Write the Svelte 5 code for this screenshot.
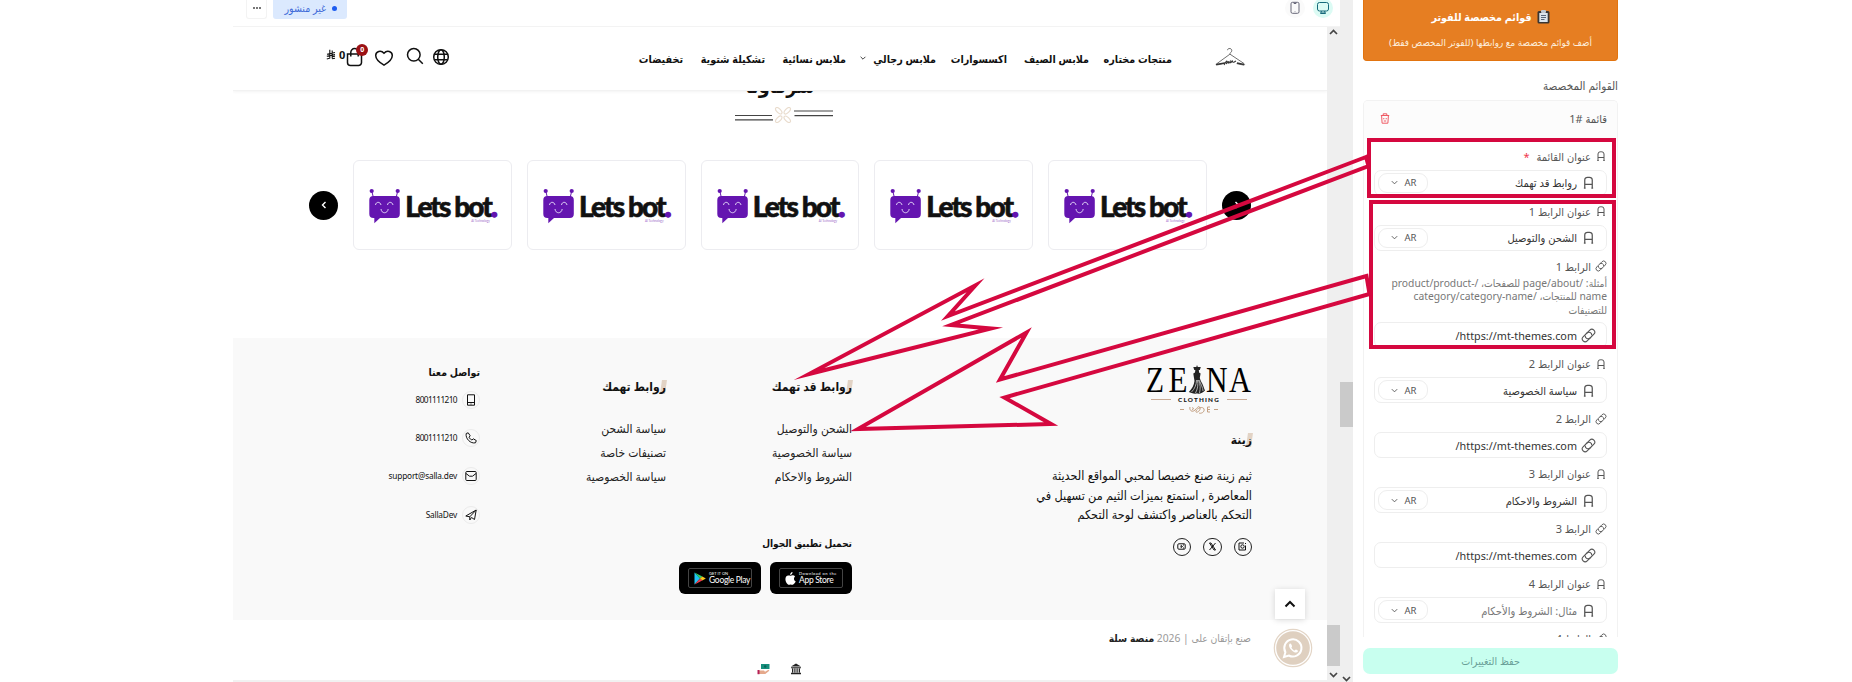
<script>
  const navItems = [
    { text: "منتجات مختاره", width: 70 },
    { text: "ملابس الصيف", width: 69 },
    { text: "اكسسوارات", width: 58 },
    { text: "ملابس رجالي", width: 61, arrow: true },
    { text: "ملابس نسائية", width: 68 },
    { text: "تشكيلة شتوية", width: 69 },
    { text: "تخفيضات", width: 46 },
  ];

  const partners = [1, 2, 3, 4, 5];

  const linkColumns = [
    { title: "روابط قد تهمك", links: ["الشحن والتوصيل", "سياسة الخصوصية", "الشروط والاحكام"] },
    { title: "روابط تهمك", links: ["سياسة الشحن", "تصنيفات خاصة", "سياسة الخصوصية"] },
  ];

  const contacts = [
    { icon: "mobile", text: "8001111210", number: true },
    { icon: "phone", text: "8001111210", number: true },
    { icon: "mail", text: "support@salla.dev" },
    { icon: "send", text: "SallaDev" },
  ];

  const fields = [
    { kind: "text", label: "عنوان القائمة", value: "روابط قد تهمك", required: true },
    { kind: "text", label: "عنوان الرابط 1", value: "الشحن والتوصيل" },
    { kind: "link", label: "الرابط 1", value: "https://mt-themes.com/", hint: true },
    { kind: "text", label: "عنوان الرابط 2", value: "سياسة الخصوصية" },
    { kind: "link", label: "الرابط 2", value: "https://mt-themes.com/" },
    { kind: "text", label: "عنوان الرابط 3", value: "الشروط والاحكام" },
    { kind: "link", label: "الرابط 3", value: "https://mt-themes.com/" },
    { kind: "text", label: "عنوان الرابط 4", value: "مثال: الشروط والأحكام", placeholder: true },
    { kind: "link", label: "الرابط 4", value: "" },
  ];
</script>

{#snippet fieldIcon(kind, size)}
  {#if kind === "text"}
    <svg width={size} height={size} viewBox="0 0 12 12" class="line">
      <path d="M3 10.500V4A2.200 2.200 0 0 1 5.200 1.800h1.600A2.200 2.200 0 0 1 9 4v6.500M3 7.500h6M2.300 10.500h1.400M8.300 10.500h1.400" />
    </svg>
  {:else}
    <svg width={size} height={size} viewBox="0 0 14 14" class="line">
      <g transform="rotate(-45 7 7)">
        <path d="M6.500 9.700H2.600a2.700 2.700 0 0 1 0-5.400h5a2.700 2.700 0 0 1 1.600 4.800" />
        <path d="M7.500 4.300h3.900a2.700 2.700 0 0 1 0 5.400h-5a2.700 2.700 0 0 1-1.600-4.800" />
      </g>
    </svg>
  {/if}
{/snippet}

{#snippet chevron(size)}
  <svg width={size} height={size} viewBox="0 0 10 10" class="line"><path d="M2 3.500l3 3 3-3" /></svg>
{/snippet}

<div class="page">
  <div class="preview">
    <div class="toolbar">
      <div class="devices">
        <span class="device active">
          <svg width="14" height="14" viewBox="0 0 14 14" class="line">
            <rect x="1.5" y="1.5" width="11" height="8.5" rx="2" />
            <path d="M5.5 10l-1 2.5h5l-1-2.500M5 12h4" />
          </svg>
        </span>
        <span class="device">
          <svg width="12" height="14" viewBox="0 0 12 14" class="line">
            <rect x="2" y="1.300" width="8" height="11" rx="1.500" />
            <path d="M5 1.500v1h2v-1M6 10.500v.5" />
          </svg>
        </span>
      </div>
      <div class="status">
        <span class="badge"><i></i>غير منشور</span>
        <button class="more" aria-label="المزيد"><i></i><i></i><i></i></button>
      </div>
    </div>

    <div class="frame">
      <div class="store">
        <header>
          <svg class="hanger" width="32" height="20" viewBox="0 0 32 20">
            <path d="M13.500 3.200C13.500.8 18 .8 17.800 3.800c-.2 1.700-2 1.600-1.900 3.400L3.500 16.200c-2 1.400-1.500 2 .5 1.600l6-1.500M16 7.200l13.500 9c1.800 1.500 1.200 2-.8 1.700l-6-1.300" />
            <path d="M2 17.500l9-1.500M30 17.500l-7-1.500" stroke-width="1.500" />
            <path d="M10 18c1.500-2 2.500-5 3-3.500s-1.500 3 0 1.500 1.300-2 1.500-.5.9 0 1.700-1.200c.2 1.500 0 2 1 1s1-2.500 1.300-.8 1.700.3 3.500-.5" stroke-width="1.100" />
          </svg>
          <nav>
            {#each navItems as item}
              <a href="#top" class:has-arrow={item.arrow} style="width: {item.width}px">
                {item.text}
                {#if item.arrow}<span class="nav-arrow">{@render chevron(8)}</span>{/if}
              </a>
            {/each}
          </nav>
          <div class="actions">
            <svg width="18" height="18" viewBox="0 0 18 18" class="line globe">
              <circle cx="9" cy="9" r="7.300" />
              <ellipse cx="9" cy="9" rx="3.300" ry="7.300" />
              <path d="M2.500 6.200h13M2.500 11.800h13" />
            </svg>
            <svg width="18" height="18" viewBox="0 0 18 18" class="line search">
              <circle cx="7.800" cy="7.800" r="6.300" /><path d="M12.300 12.300l4.500 4.500" />
            </svg>
            <svg width="20" height="18" viewBox="0 0 20 18" class="line heart">
              <path d="M10 16.200C5.500 13.500 1.700 10.200 1.700 6.500 1.700 2.300 7 .7 10 4.200 13 .7 18.300 2.300 18.300 6.500c0 3.700-3.800 7-8.300 9.700z" />
            </svg>
            <div class="cart">
              <svg width="17" height="20" viewBox="0 0 17 20" class="line">
                <path d="M1.500 7h14v8.500a3 3 0 0 1-3 3h-8a3 3 0 0 1-3-3zM4.800 9.500V5.300a3.700 3.700 0 0 1 7.400 0v4.200" />
              </svg>
              <span class="count">0</span>
            </div>
            <span class="total">0</span>
            <svg width="10" height="11" viewBox="0 0 10 11" class="riyal">
              <path d="M3.800.8v8.400L.8 10M6.200 1.500v8M1 5.200l8-1.700M.8 7.300l8.200-1.700M6.200 7.800L9 7.200M6.200 9.800L9 9.200" />
            </svg>
          </div>
        </header>

        <section class="partners">
          <h2>شركاؤنا</h2>
          <svg class="ornament" width="98" height="16" viewBox="0 0 98 16">
            <path d="M0 8.500h37M0 12.800h38M59 4h39M59.500 8.700h38.500" stroke="#444" stroke-width="1.200" />
            <g fill="none" stroke="#e9dccd" stroke-width="1.200">
              {#each [45, 135, 225, 315] as angle}
                <ellipse cx="54" cy="8" rx="4" ry="2" transform="rotate({angle} 48 8)" />
              {/each}
            </g>
          </svg>
          <div class="slider">
            <button class="arrow" aria-label="السابق">
              <svg width="8" height="10" viewBox="0 0 8 10"><path d="M2.500 2l3 3-3 3" /></svg>
            </button>
            <div class="cards">
              {#each partners as partner (partner)}
                <div class="card">
                  <div class="brand">
                    <svg width="32" height="36" viewBox="0 0 32 36">
                      <g stroke="#6415b0" stroke-width="1"><path d="M3 4l1.500 6M28.500 4L27 10" /></g>
                      <circle cx="2.700" cy="3" r="2.100" fill="#6415b0" />
                      <circle cx="28.700" cy="3" r="2.100" fill="#6415b0" />
                      <rect x=".3" y="8" width="30.500" height="22" rx="4" fill="#6415b0" />
                      <path d="M5.300 29v6.200l6.500-6z" fill="#6415b0" />
                      <path d="M6.500 17c.5-3.600 4.700-3.600 5.500 0M18.500 17c.5-3.600 4.700-3.600 5.500 0M12 21c.5 5 6.500 5 7.200 0" fill="none" stroke="#ded0f5" stroke-width="1" />
                    </svg>
                    <span class="word">Lets bot<b>.</b><small>AI Technology</small></span>
                  </div>
                </div>
              {/each}
            </div>
            <button class="arrow" aria-label="التالي">
              <svg width="8" height="10" viewBox="0 0 8 10"><path d="M5.500 2l-3 3 3 3" /></svg>
            </button>
          </div>
        </section>

        <footer>
          <div class="about">
            <div class="zeina">
              <svg class="zeina-name" width="106" height="30" viewBox="0 0 106 30">
                <text x="0" y="27" textLength="18" lengthAdjust="spacingAndGlyphs">Z</text>
                <text x="22.500" y="27" textLength="19" lengthAdjust="spacingAndGlyphs">E</text>
                <text x="60" y="27" textLength="21.500" lengthAdjust="spacingAndGlyphs">N</text>
                <text x="83" y="27" textLength="22" lengthAdjust="spacingAndGlyphs">A</text>
                <g transform="translate(42.500 0)">
                  <path d="M8.500 0l.8 2h3l-1 3h-1l.3 2.500 1.500 1-.8 4.500 1 3c2.500 4 3 7 4.200 9.500-2 2.500-5 3.500-8 3-3.500.5-6-.5-8.200-1.500C3.500 24 5.500 20 6 16l-.5-3-.7-4.500 1.700-1L6.800 5h-1l-1-3h3z" fill="#222" />
                  <path d="M8 15c0 5-2 9-5 12M9 15c1 5 0 9-2 13M10 15c2 5 2 8 1 13M10.500 15c2 4 4 8 4 11" fill="none" stroke="#ccc" stroke-width=".8" />
                </g>
              </svg>
              <div class="zeina-sub"><i></i>CLOTHING<i></i></div>
              <svg width="38" height="9" viewBox="0 0 38 9" class="flourish">
                <path d="M0 4.500h4M34 4.500h4" />
                <path d="M10 2c-1 3 2 6 5 3s4-5 5-2-5 6-4 3 7-5 8-2-3 5-5 4M12 3c2-1 2 2 0 1.500M27.500 2v5M27.500 2H30M27.500 4.500H30M27.500 7H30" />
              </svg>
            </div>
            <h3 class="marked">زينة</h3>
            <p>ثيم زينة صنع خصيصا لمحبي المواقع الحديثة<br />المعاصرة , استمتع بميزات الثيم من تسهيل في<br />التحكم بالعناصر واكتشف لوحة التحكم</p>
            <div class="socials">
              <span><svg width="9" height="9" viewBox="0 0 9 9" class="line"><path d="M7.500 3.500V8H1V1h5" /><circle cx="4.500" cy="4.500" r="1.700" /><path d="M7 1.500h1" /></svg></span>
              <span><svg width="9" height="9" viewBox="0 0 9 9" class="line"><path d="M1.500 1l4.500 7h1.500L3 1zM7.500 1L1.500 8" /></svg></span>
              <span><svg width="9" height="9" viewBox="0 0 9 9" class="line"><rect x=".8" y="1.800" width="7.400" height="5.400" rx="1" /><path d="M4 3.500v2l1.500-1zM6 3h1M6 6h1" /></svg></span>
            </div>
          </div>

          <div class="middle">
            <div class="columns">
              {#each linkColumns as column}
                <div class="column">
                  <h3 class="marked">{column.title}</h3>
                  {#each column.links as link}
                    <a href="#top">{link}</a>
                  {/each}
                </div>
              {/each}
            </div>
            <h4>تحميل تطبيق الجوال</h4>
            <div class="apps">
              <a href="#top" class="app">
                <span class="app-inner">
                  <svg width="11" height="13" viewBox="0 0 11 13">
                    <path d="M7.500 0C6 .2 5 1.600 5.200 3 6.600 3 7.700 1.500 7.500 0zM10 4.500C8.500 2.800 6.800 3.400 5.500 3.800 4.200 3.300 2.500 3 1.200 4.500-.5 7 .8 11 3 12.600c1 .5 1.700-.2 2.600-.2s1.600.7 2.600.2C9.500 11.800 10.300 10.500 10.700 9.300 8.600 8.300 8.500 5.700 10 4.500z" fill="#fff" />
                  </svg>
                  <span class="app-text"><small class="spaced">Download on the</small>App Store</span>
                </span>
              </a>
              <a href="#top" class="app">
                <span class="app-inner">
                  <svg width="12" height="13" viewBox="0 0 12 13">
                    <path d="M.5.5v12L6 6.500z" fill="#20c4f4" /><path d="M.5.500L6 6.500l2.300-2z" fill="#2fd06c" />
                    <path d="M.5 12.500l5.500-6 2.300 2z" fill="#ee3d4e" /><path d="M8.300 4.500L11.800 6.500l-3.500 2L6 6.500z" fill="#fbc51d" />
                  </svg>
                  <span class="app-text"><small>GET IT ON</small>Google Play</span>
                </span>
              </a>
            </div>
          </div>

          <div class="contact">
            <h4>تواصل معنا</h4>
            {#each contacts as contact}
              <div class="contact-row">
                <span class="contact-icon">
                  <svg width="12" height="12" viewBox="0 0 12 12" class="line">
                    {#if contact.icon === "mobile"}
                      <path d="M2.500.8h7v10.400h-7zM2.500 8.500h7M5.500 10h1" />
                    {:else if contact.icon === "phone"}
                      <path d="M1.200 1.500L3.200.8l2 3L4 5.200C4.800 6.800 5.700 7.500 7 8l1.300-1.200 3 1.800-.8 2.200C5.500 12 .2 6.500 1.200 1.500z" />
                    {:else if contact.icon === "mail"}
                      <rect x=".8" y="1.500" width="10.400" height="9" rx="1" /><path d="M1 3.500l3.500 2.700h3L11 3.500" />
                    {:else}
                      <path d="M.8 7L11.200 1 9.500 10.500 6.500 8.500 4.800 11V7.800L11 1.200M.8 7l4 .8" />
                    {/if}
                  </svg>
                </span>
                <bdi class:number={contact.number}>{contact.text}</bdi>
              </div>
            {/each}
          </div>
        </footer>

        <div class="bottom">
          <div class="rights">صنع بإتقان على | 2026 <b>منصة سلة</b></div>
          <div class="payments">
            <svg width="12" height="12" viewBox="0 0 12 12">
              <path d="M6 .5L11 3.500H1zM1 4.200h10v1H1zM2 5.500h1.300v4H2zM4.300 5.500h1.200v4H4.300zM6.500 5.500h1.200v4H6.500zM8.700 5.500H10v4H8.700zM1 9.800h10v1.500H1z" fill="#222" />
            </svg>
            <svg width="13" height="12" viewBox="0 0 13 12">
              <rect x="4" y="1" width="8.500" height="5" fill="#168f7c" /><circle cx="8.200" cy="3.500" r="1.200" fill="#0c6156" />
              <path d="M2 7.500h5l1 1.300 3.500-2 .8.900-4 3.300H2z" fill="#e5a98c" /><rect x=".5" y="7" width="2" height="4.200" fill="#b62058" />
            </svg>
          </div>
        </div>

        <button class="to-top" aria-label="إلى الأعلى">
          <svg width="12" height="8" viewBox="0 0 12 8"><path d="M1.500 6.500L6 2l4.500 4.500" fill="none" stroke="#111" stroke-width="2" /></svg>
        </button>
        <div class="whatsapp">
          <svg width="40" height="40" viewBox="0 0 40 40">
            <circle cx="20" cy="20" r="18.700" fill="none" stroke="#e3d5c6" stroke-width="1.200" />
            <circle cx="20" cy="20" r="16.800" fill="#dfd0c0" />
            <path d="M11 29l1.400-4.800A8.600 8.600 0 1 1 15.800 27.500z" fill="none" stroke="#fff" stroke-width="2" />
            <path d="M17 15.500c-2 1.300-.6 4.500 1.700 6.700s5 3.300 6.200 1.200c.3-.8-.2-1.100-1.900-1.900-.6-.2-.9.800-1.400 1-.9 0-3.200-2.300-3.200-3.100.2-.5.900-.8.600-1.500-.6-1.600-.9-2.600-2-2.400z" fill="#fff" />
          </svg>
        </div>
      </div>
      <div class="scrollbar inner">
        <svg width="13" height="10" viewBox="0 0 13 10"><path d="M3 7l3.500-3.500L10 7" /></svg>
        <div class="thumb"></div>
        <svg width="13" height="10" viewBox="0 0 13 10"><path d="M3 3l3.500 3.500L10 3" /></svg>
      </div>
    </div>
  </div>

  <div class="scrollbar outer">
    <div class="thumb"></div>
    <svg width="13" height="10" viewBox="0 0 13 10"><path d="M3 3l3.500 3.500L10 3" /></svg>
  </div>

  <aside>
    <div class="banner">
      <h1>
        <svg width="13" height="14" viewBox="0 0 13 14">
          <rect x=".5" y="1" width="12" height="12.500" rx="1.500" fill="#3b3632" /><rect x="2.300" y="3" width="8.400" height="9" fill="#dce5ec" />
          <rect x="4" y="0" width="5" height="3" rx="1" fill="#bfc8d0" /><path d="M4 5.500h5M4 7.500h5M4 9.500h3.500" stroke="#58677a" />
        </svg>
        قوائم مخصصة للفوتر
      </h1>
      <p>أضف قوائم مخصصة مع روابطها (للفوتر المخصص فقط)</p>
    </div>
    <div class="group-label">القوائم المخصصة</div>
    <div class="group">
      <div class="group-head">
        <span>قائمة #1</span>
        <svg width="10" height="11" viewBox="0 0 10 11" class="line">
          <path d="M.8 2.500h8.400M3.200 2.300V.8h3.600v1.500M1.600 2.700l.5 7.500h5.800l.5-7.500M3.800 5v1.300M6.200 5v1.300M3.800 8h2.400" />
        </svg>
      </div>
      <div class="fields">
        {#each fields as field}
          <div class="field-label">
            {@render fieldIcon(field.kind, 12)}
            <span>{field.label}</span>
            {#if field.required}<em>*</em>{/if}
          </div>
          {#if field.hint}
            <p class="hint">أمثلة: /page/about للصفحات، /product/product-name للمنتجات، /category/category-name للتصنيفات</p>
          {/if}
          <div class="input">
            {@render fieldIcon(field.kind, 15)}
            <span class="value" class:placeholder={field.placeholder} class:url={field.kind === "link"}>{field.value}</span>
            {#if field.kind === "text"}
              <span class="lang">AR {@render chevron(9)}</span>
            {/if}
          </div>
        {/each}
      </div>
    </div>
    <button class="save">حفظ التغييرات</button>
  </aside>

  <!-- callouts that tie the form fields to the footer column -->
  <svg class="callouts" width="1852" height="682" viewBox="0 0 1852 682">
    <rect x="1369" y="140" width="245" height="56" />
    <rect x="1371" y="202" width="243" height="145" />
    <path d="M1366 157L948 316 975.500 285.300 809 374 991 328.500 951 325 1368.500 166z" />
    <path d="M1366.500 276L1000 379.500 1026.500 332.500 858 429 1051 424 1004.500 397.500 1369.500 294z" />
  </svg>
</div>

<style>
  :global(body) {
    margin: 0;
    background: #fff;
  }

  .page {
    position: relative;
    display: flex;
    width: 1852px;
    height: 682px;
    overflow: hidden;
    box-sizing: border-box;
    padding-left: 233px;
    font-family: "Noto Sans", "DejaVu Sans Condensed", "DejaVu Sans", sans-serif;
    font-size: 11px;
    color: #111;
  }

  .page :global(*) {
    box-sizing: border-box;
  }

  .page svg {
    display: block;
    flex: none;
  }

  .line {
    fill: none;
    stroke: currentColor;
    stroke-width: 1;
  }

  button {
    border: 0;
    padding: 0;
    font-family: inherit;
  }

  a {
    color: inherit;
    text-decoration: none;
    white-space: nowrap;
  }

  h1,
  h2,
  h3,
  h4,
  p {
    margin: 0;
  }

  .preview {
    width: 1107px;
    direction: rtl;
    display: flex;
    flex-direction: column;
  }

  .toolbar {
    height: 27px;
    display: flex;
    justify-content: space-between;
    padding: 0 7px 0 13px;
    border-bottom: 1px solid #f3f3f3;
  }

  .devices {
    display: flex;
    gap: 8px;
    margin-top: -2px;
  }

  .device {
    width: 20px;
    height: 20px;
    display: grid;
    place-items: center;
    border-radius: 50%;
    background: #fafafa;
    color: #667;
  }

  .device.active {
    background: #dcfbf4;
    color: #16697a;
  }

  .status {
    display: flex;
    gap: 6px;
  }

  .badge {
    width: 74px;
    height: 19px;
    display: flex;
    align-items: center;
    gap: 6px;
    padding: 0 10px 3px 0;
    border-radius: 0 0 3px 3px;
    background: #dbe9fe;
    color: #3e6bd8;
    font-size: 10.500px;
    white-space: nowrap;
  }

  .badge i {
    width: 5px;
    height: 5px;
    border-radius: 50%;
    background: #1d5cf0;
  }

  .more {
    width: 21px;
    height: 19px;
    display: flex;
    align-items: center;
    justify-content: center;
    gap: 1px;
    padding-bottom: 2px;
    background: #fff;
    border: 1px solid #f3f3f3;
    border-top: 0;
    border-radius: 0 0 3px 3px;
  }

  .more i {
    width: 2px;
    height: 2px;
    background: #777;
  }

  .frame {
    flex: 1;
    display: flex;
    border-bottom: 2px solid #f1f1f1;
  }

  .store {
    position: relative;
    width: 1094px;
    height: 653px;
    overflow: hidden;
    direction: rtl;
  }

  header {
    position: relative;
    height: 64px;
    display: flex;
    align-items: flex-start;
    padding: 20px 81px 0 93px;
    background: #fff;
    border-bottom: 1px solid #f2f2f2;
    box-shadow: 0 1px 3px rgba(0, 0, 0, 0.05);
  }

  .hanger {
    fill: none;
    stroke: #333;
    stroke-width: 0.7;
  }

  nav {
    display: flex;
    gap: 13px;
    margin: 3px 42px 0 0;
    line-height: 18px;
    font-size: 10.700px;
    font-weight: bold;
  }

  nav a {
    display: flex;
    align-items: center;
    gap: 6px;
  }

  nav .has-arrow {
    margin-left: 16px;
  }

  .nav-arrow {
    margin-top: -3px;
  }

  .actions {
    display: flex;
    margin-right: auto;
    align-items: flex-start;
  }

  .actions svg {
    stroke-width: 1.500;
  }

  .globe {
    margin: 1px 0 0 8px;
  }

  .search {
    margin-left: 12px;
  }

  .heart {
    margin: 2px 0 0 11px;
  }

  .cart {
    position: relative;
  }

  .count {
    position: absolute;
    top: -3px;
    right: -5px;
    width: 12px;
    height: 12px;
    border-radius: 50%;
    background: #9b1115;
    color: #fff;
    font-size: 7px;
    font-weight: bold;
    line-height: 12px;
    text-align: center;
  }

  .total {
    font-size: 11px;
    font-weight: bold;
    line-height: 16px;
    margin: 0 1px 0 3px;
  }

  .actions .riyal {
    margin-top: 2px;
    fill: none;
    stroke: #111;
    stroke-width: 1.100;
  }

  .partners {
    height: 272px;
    margin-top: -25px;
    display: flex;
    flex-direction: column;
    align-items: center;
  }

  .partners h2 {
    height: 41px;
    font-size: 19.500px;
    line-height: 39px;
  }

  .ornament {
    margin-left: 7px;
  }

  .slider {
    width: 942px;
    margin-top: 37px;
    display: flex;
    align-items: center;
    justify-content: space-between;
  }

  .arrow {
    width: 29px;
    height: 29px;
    display: grid;
    place-items: center;
    border-radius: 50%;
    background: #000;
  }

  .arrow svg {
    fill: none;
    stroke: #fff;
    stroke-width: 1.400;
  }

  .cards {
    display: flex;
    gap: 15px;
  }

  .card {
    width: 158.700px;
    height: 90px;
    display: flex;
    align-items: flex-start;
    direction: ltr;
    padding: 27px 0 0 15px;
    border: 1px solid #ececf0;
    border-radius: 6px;
  }

  .brand {
    display: flex;
    align-items: flex-start;
    gap: 4px;
    white-space: nowrap;
  }

  .word {
    position: relative;
    margin-top: 1px;
    font-family: Lato, sans-serif;
    font-size: 28px;
    font-weight: 900;
    letter-spacing: -1.900px;
    line-height: 34px;
    -webkit-text-stroke: 0.600px currentColor;
  }

  .word b {
    color: #6415b0;
    -webkit-text-stroke: 1.500px #6415b0;
  }

  .word small {
    position: absolute;
    right: 6px;
    bottom: 0;
    font-size: 3px;
    line-height: 4px;
    font-weight: normal;
    letter-spacing: 0;
    color: #9d6cc9;
    -webkit-text-stroke: 0;
  }

  footer {
    height: 282px;
    display: flex;
    align-items: flex-start;
    padding-right: 75px;
    background: #f9f9f9;
  }

  .about {
    width: 216px;
    padding-top: 27px;
  }

  .zeina {
    width: 106px;
    height: 50px;
    display: flex;
    flex-direction: column;
    align-items: center;
    direction: ltr;
  }

  .zeina-name {
    font-family: "Liberation Serif", serif;
    font-size: 36px;
  }

  .zeina-sub {
    width: 96px;
    margin-top: 1px;
    display: flex;
    align-items: center;
    justify-content: space-between;
    font-family: Lato, sans-serif;
    font-size: 6.300px;
    font-weight: 900;
    line-height: 7px;
    letter-spacing: 1.200px;
  }

  .zeina-sub i {
    width: 20px;
    height: 1px;
    background: #c9ab95;
  }

  .flourish {
    margin-top: 2px;
    fill: none;
    stroke: #c4a183;
    stroke-width: 1;
  }

  .marked {
    width: fit-content;
    position: relative;
    z-index: 0;
    font-size: 12px;
    line-height: 20px;
    white-space: nowrap;
  }

  .marked::before {
    content: "";
    position: absolute;
    z-index: -1;
    top: 3px;
    right: 0;
    width: 5px;
    height: 14px;
    background: #e2d3c5;
    transform: skewX(-8deg);
  }

  .about .marked {
    margin-top: 15px;
  }

  .about p {
    margin-top: 16px;
    font-size: 12.550px;
    line-height: 19.500px;
    white-space: nowrap;
  }

  .socials {
    display: flex;
    gap: 12px;
    margin-top: 13px;
  }

  .socials span {
    width: 18.500px;
    height: 18.500px;
    display: grid;
    place-items: center;
    border: 1px solid #222;
    border-radius: 50%;
  }

  .middle {
    width: 186px;
    margin-right: 184px;
    padding-top: 39px;
  }

  .columns {
    display: flex;
  }

  .column {
    width: 186px;
    flex: none;
    display: flex;
    flex-direction: column;
    font-size: 12px;
    line-height: 24px;
    color: #222;
  }

  .column .marked {
    margin-bottom: 20px;
    color: #111;
  }

  h4 {
    font-size: 10px;
    line-height: 18px;
    white-space: nowrap;
  }

  .middle h4 {
    margin-top: 45px;
  }

  .apps {
    display: flex;
    gap: 9px;
    margin-top: 10px;
    direction: rtl;
  }

  .app {
    width: 82px;
    height: 32px;
    flex: none;
    padding: 6px 9px;
    border-radius: 6px;
    background: #000;
    color: #fff;
  }

  .app-inner {
    height: 20px;
    display: flex;
    direction: ltr;
    align-items: center;
    gap: 3px;
    padding-left: 5px;
    border: 1px solid #444;
    border-radius: 2px;
  }

  .app-text {
    display: flex;
    flex-direction: column;
    font-family: Lato, sans-serif;
    font-size: 8.500px;
    line-height: 9px;
    letter-spacing: -0.300px;
  }

  .app-text small {
    font-size: 4px;
    line-height: 5px;
    letter-spacing: 0;
  }

  .app-text .spaced {
    letter-spacing: 0.500px;
  }

  .contact {
    width: 180px;
    margin-right: 186px;
    padding-top: 25px;
  }

  .contact h4 {
    font-size: 10.500px;
    margin-bottom: 1px;
  }

  .contact-row {
    height: 38.200px;
    display: flex;
    align-items: flex-start;
    gap: 5px;
    padding-top: 9px;
    font-size: 8.300px;
    letter-spacing: -0.200px;
    line-height: 18px;
  }

  .number {
    letter-spacing: -0.600px;
  }

  .contact-icon {
    width: 18px;
    height: 18px;
    display: grid;
    place-items: center;
    border: 1px solid #ebebeb;
    border-radius: 50%;
  }

  .bottom {
    padding: 9px 76px 0 0;
  }

  .rights {
    color: #999;
    font-size: 10.300px;
    line-height: 18px;
  }

  .rights b {
    color: #222;
    font-weight: 600;
  }

  .payments {
    display: flex;
    gap: 20px;
    margin: 16px 449px 0 0;
  }

  .to-top {
    position: absolute;
    left: 1042px;
    top: 562px;
    width: 30px;
    height: 30px;
    display: grid;
    place-items: center;
    background: #fff;
    box-shadow: 0 1px 6px rgba(0, 0, 0, 0.15);
  }

  .whatsapp {
    position: absolute;
    left: 1039.500px;
    top: 601px;
  }

  .scrollbar {
    width: 13px;
    display: flex;
    flex-direction: column;
    justify-content: space-between;
    background: #efefef;
  }

  .scrollbar svg {
    fill: none;
    stroke: #444;
    stroke-width: 1.700;
  }

  .inner {
    order: -1;
    height: 653px;
  }

  .inner .thumb {
    height: 41px;
    margin: auto 0 4px;
    background: #cacaca;
  }

  .outer .thumb {
    height: 45px;
    margin-top: 382px;
    background: #cacaca;
  }

  .outer svg {
    margin-bottom: -2px;
  }

  aside {
    width: 265px;
    height: 682px;
    padding-left: 10px;
    direction: rtl;
    overflow: hidden;
    color: #555;
  }

  .banner {
    height: 61px;
    padding-top: 6px;
    border: 1px solid #e2740f;
    border-top: 0;
    border-radius: 0 0 4px 4px;
    background: #e67e22;
    color: #fff;
    text-align: center;
  }

  .banner h1 {
    display: flex;
    justify-content: center;
    align-items: center;
    gap: 5px;
    font-size: 10.700px;
    line-height: 22px;
  }

  .banner p {
    margin-top: 6px;
    font-size: 9.800px;
    line-height: 18px;
    white-space: nowrap;
    color: #fdeedd;
  }

  .group-label {
    height: 39px;
    padding-top: 15px;
    font-size: 11.600px;
    line-height: 20px;
  }

  .group {
    height: 537px;
    overflow: hidden;
    border: 1px solid #f2f2f2;
    border-bottom: 0;
    border-radius: 5px 5px 0 0;
  }

  .group-head {
    height: 38px;
    display: flex;
    align-items: center;
    justify-content: space-between;
    padding: 0 10px 3px 16px;
    background: #fcfcfc;
    font-size: 11px;
  }

  .group-head svg {
    color: #ef5a64;
  }

  .fields {
    padding: 1.500px 10px 0;
  }

  .field-label {
    height: 29px;
    display: flex;
    align-items: center;
    gap: 4px;
    padding-top: 2px;
    font-size: 11px;
    white-space: nowrap;
  }

  .field-label em {
    margin-right: 3px;
    font-style: normal;
    color: #f0384b;
  }

  .hint {
    margin: -3px 0 5px;
    font-size: 10.300px;
    line-height: 13.500px;
    color: #777;
  }

  .input {
    height: 26px;
    display: flex;
    align-items: center;
    gap: 4px;
    padding: 0 10px 0 3px;
    border: 1px solid #eee;
    border-radius: 7px;
    white-space: nowrap;
  }

  .value {
    flex: 1;
    font-size: 11.100px;
    color: #333;
  }

  .value.url {
    font-size: 10.800px;
  }

  .value.placeholder {
    color: #777;
  }

  .lang {
    width: 50px;
    height: 20px;
    display: flex;
    align-items: center;
    justify-content: center;
    gap: 6px;
    border: 1px solid #eee;
    border-radius: 9px;
    font-size: 9.500px;
  }

  .save {
    width: 255px;
    height: 26px;
    margin-top: 11px;
    border-radius: 7px;
    background: #c8ffef;
    color: #6a9f98;
    font-size: 10.700px;
  }

  .callouts {
    position: absolute;
    top: 0;
    left: 0;
    fill: none;
    stroke: #d5083f;
    stroke-width: 4;
    stroke-miterlimit: 30;
    pointer-events: none;
  }
</style>
